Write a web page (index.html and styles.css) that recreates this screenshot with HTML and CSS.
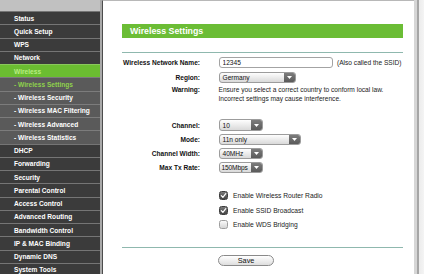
FILE: index.html
```html
<!DOCTYPE html>
<html>
<head>
<meta charset="utf-8">
<link rel="stylesheet" href="styles.css">
</head>
<body>
<div class="page">
  <nav class="sidebar">
    <div class="sidebar-top"></div>
    <ul class="menu">
      <li>Status</li>
      <li>Quick Setup</li>
      <li>WPS</li>
      <li>Network</li>
      <li class="active">Wireless</li>
      <li class="sub current">- Wireless Settings</li>
      <li class="sub">- Wireless Security</li>
      <li class="sub">- Wireless MAC Filtering</li>
      <li class="sub">- Wireless Advanced</li>
      <li class="sub">- Wireless Statistics</li>
      <li>DHCP</li>
      <li>Forwarding</li>
      <li>Security</li>
      <li>Parental Control</li>
      <li>Access Control</li>
      <li>Advanced Routing</li>
      <li>Bandwidth Control</li>
      <li>IP &amp; MAC Binding</li>
      <li>Dynamic DNS</li>
      <li>System Tools</li>
    </ul>
  </nav>
  <main class="content">
    <div class="panel">
      <h1 class="title">Wireless Settings</h1>
      <div class="rule"></div>
      <div class="form">
        <div class="label">Wireless Network Name:</div>
        <div class="value"><input class="textbox" type="text" value="12345"><span class="hint">(Also called the SSID)</span></div>

        <div class="label">Region:</div>
        <div class="value"><div class="select w-region"><span class="select-text">Germany</span><span class="select-arrow"><svg width="5" height="3" viewBox="0 0 5 3"><path d="M0 0H5L2.5 3Z" fill="#fff"/></svg></span></div></div>

        <div class="label label-top">Warning:</div>
        <div class="value warning">Ensure you select a correct country to conform local law.<br>Incorrect settings may cause interference.</div>

        <div class="spacer"></div>
        <div class="spacer"></div>

        <div class="label">Channel:</div>
        <div class="value"><div class="select w-small"><span class="select-text">10</span><span class="select-arrow"><svg width="5" height="3" viewBox="0 0 5 3"><path d="M0 0H5L2.5 3Z" fill="#fff"/></svg></span></div></div>

        <div class="label">Mode:</div>
        <div class="value"><div class="select w-mode"><span class="select-text">11n only</span><span class="select-arrow"><svg width="5" height="3" viewBox="0 0 5 3"><path d="M0 0H5L2.5 3Z" fill="#fff"/></svg></span></div></div>

        <div class="label">Channel Width:</div>
        <div class="value"><div class="select w-small"><span class="select-text">40MHz</span><span class="select-arrow"><svg width="5" height="3" viewBox="0 0 5 3"><path d="M0 0H5L2.5 3Z" fill="#fff"/></svg></span></div></div>

        <div class="label">Max Tx Rate:</div>
        <div class="value"><div class="select w-small"><span class="select-text tight">150Mbps</span><span class="select-arrow"><svg width="5" height="3" viewBox="0 0 5 3"><path d="M0 0H5L2.5 3Z" fill="#fff"/></svg></span></div></div>
      </div>

      <div class="options">
        <div class="option"><span class="cb checked"><svg width="7" height="7" viewBox="0 0 7 7"><path d="M1.3 3.6L2.9 5.3L5.8 1.6" fill="none" stroke="#fff" stroke-width="1.2" stroke-linecap="round" stroke-linejoin="round"/></svg></span>Enable Wireless Router Radio</div>
        <div class="option"><span class="cb checked"><svg width="7" height="7" viewBox="0 0 7 7"><path d="M1.3 3.6L2.9 5.3L5.8 1.6" fill="none" stroke="#fff" stroke-width="1.2" stroke-linecap="round" stroke-linejoin="round"/></svg></span>Enable SSID Broadcast</div>
        <div class="option"><span class="cb"></span>Enable WDS Bridging</div>
      </div>

      <div class="rule rule-bottom"></div>
      <div class="actions"><button class="btn" type="button">Save</button></div>
    </div>
  </main>
  <div class="edge"></div>
</div>
</body>
</html>
```

FILE: styles.css
```css
* { box-sizing: border-box; }
html, body { margin: 0; padding: 0; }
body {
  width: 424px;
  height: 274px;
  overflow: hidden;
  background: #fff;
  font-family: "Liberation Sans", Arial, Helvetica, sans-serif;
  color: #111;
}
.page { display: flex; height: 274px; }

.sidebar {
  width: 102px;
  flex: none;
  background: #3a3a3a;
  border-right: 2px solid #a9a9a9;
  overflow: hidden;
}
.sidebar-top { height: 11px; background: #c1c1c1; }
.menu { list-style: none; margin: 0; padding: 0; }
.menu li {
  height: 13.25px;
  border-top: 1px solid #757575;
  background: #3b3b3b;
  color: #fff;
  font-weight: bold;
  font-size: 6.6px;
  padding-left: 14px;
  display: flex;
  align-items: center;
  white-space: nowrap;
}
.menu li.sub { background: #5a5a5a; border-top-color: #7c7c7c; }
.menu li.active { background: #6bbd31; border-top-color: #8ac85c; color: #b8ec83; }
.menu li.current { color: #8fd24c; }

.content {
  flex: 1;
  border-left: 1px solid #4d4d4d;
  border-top: 1px solid #b8b8b8;
  padding: 23.3px 0 0 19px;
  overflow: hidden;
}
.panel { width: 281px; }
.title {
  margin: 0;
  height: 13.4px;
  background: #6bbd35;
  color: #fff;
  font-size: 8.8px;
  font-weight: bold;
  padding-left: 8px;
  display: flex;
  align-items: center;
}
.rule { height: 1px; background: #8fb8ae; margin-top: 14.6px; }

.form {
  display: grid;
  grid-template-columns: 78px 1fr;
  grid-template-rows: 14.8px 14.8px auto 15px 14.2px 14.2px 14.2px 14.2px;
  column-gap: 18.5px;
  align-items: center;
  margin-top: 2.15px;
  font-size: 6.6px;
}
.label { font-weight: bold; text-align: right; white-space: nowrap; color: #111; }
.label-top { align-self: start; line-height: 9px; }
.value { display: flex; align-items: center; white-space: nowrap; }
.warning { display: block; line-height: 9px; color: #222; }

.textbox {
  width: 114.5px;
  height: 11.3px;
  border: 1px solid #a3a3a3;
  border-radius: 3px;
  padding: 0 0 0 3px;
  margin: 0;
  font-family: inherit;
  font-size: 6.6px;
  color: #111;
  background: #fff;
  outline: none;
}
.hint { margin-left: 4px; color: #222; }

.select {
  display: flex;
  height: 11.3px;
  border: 1px solid #9c9c9c;
  border-radius: 3px;
  background: linear-gradient(#fefefe, #d9d9d9);
  overflow: hidden;
}
.w-region { width: 77px; }
.w-small { width: 44.5px; }
.w-mode { width: 82.5px; }
.select-text { flex: 1; min-width: 0; padding-left: 3px; display: flex; align-items: center; color: #111; }
.select-text.tight { padding-left: 2px; letter-spacing: -0.15px; }
.select-arrow {
  width: 11px;
  flex: none;
  background: linear-gradient(#7c7c7c, #5a5a5a);
  display: flex;
  align-items: center;
  justify-content: center;
}

.options { margin-top: 13.9px; padding-left: 97px; font-size: 6.7px; color: #222; }
.option { height: 14.5px; display: flex; align-items: center; }
.cb {
  width: 9px;
  height: 9px;
  border-radius: 2.5px;
  margin-right: 5px;
  border: 1px solid #9e9e9e;
  background: linear-gradient(#fafafa, #d6d6d6);
  display: flex;
  align-items: center;
  justify-content: center;
}
.cb.checked { border-color: #3e3e3e; background: linear-gradient(#7a7a7a, #454545); }

.rule-bottom { margin-top: 15px; }
.actions { margin-top: 6.7px; padding-left: 96.3px; }
.btn {
  width: 55.5px;
  height: 11px;
  border: 1px solid #8a8a8a;
  border-radius: 6px;
  background: linear-gradient(#ffffff, #dedede);
  font-family: inherit;
  font-size: 7.3px;
  color: #111;
  padding: 0;
  display: flex;
  align-items: center;
  justify-content: center;
}

.edge {
  width: 10px;
  flex: none;
  background: linear-gradient(to right, #d6d6d6 0, #d6d6d6 2.5px, #a6a6a6 2.5px, #a6a6a6 5px, #ececec 5px, #f4f4f4 10px);
}
```
